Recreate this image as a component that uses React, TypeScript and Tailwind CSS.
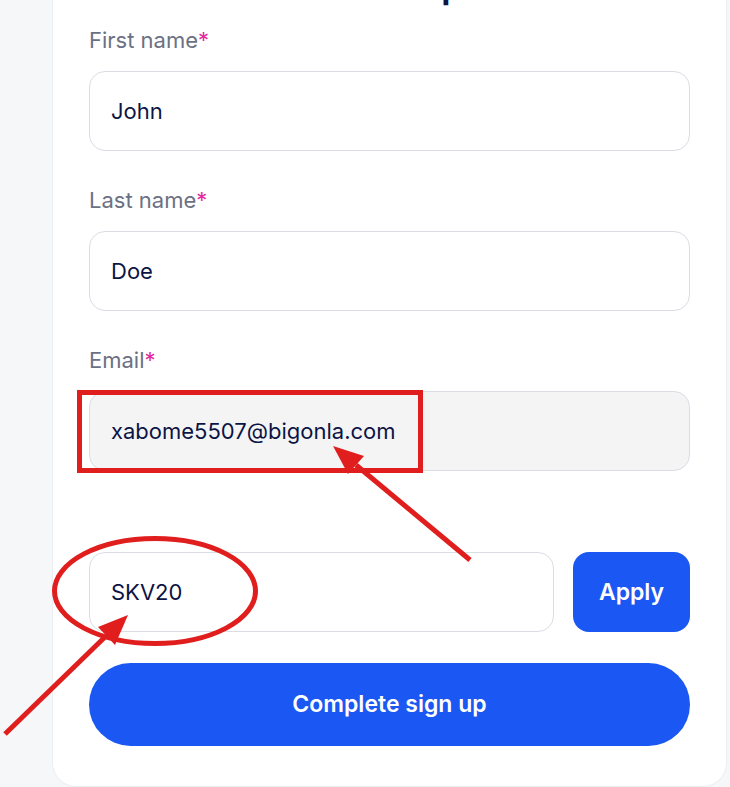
import React from "react";

const font = { fontFamily: "Inter, 'Noto Sans', sans-serif" };

interface FieldProps {
  label: string;
  value: string;
  disabled?: boolean;
  className?: string;
}

const Field = ({ label, value, disabled, className }: FieldProps) => {
  return (
    <div className={className}>
      <label className="block h-[30px] text-[22px] leading-[30px] text-[#6b7184]">
        {label}
        <span className="text-[#e2289d]">*</span>
      </label>
      <input
        readOnly
        value={value}
        className={
          disabled
            ? "mt-[16px] block h-[80px] w-full rounded-[16px] border border-[#dadde4] bg-[#f4f4f5] px-[21px] text-[22px] text-[#0c1445] outline-none"
            : "mt-[16px] block h-[80px] w-full rounded-[16px] border border-[#dadde4] bg-white px-[21px] text-[22px] text-[#0c1445] outline-none"
        }
      />
    </div>
  );
};

const Annotations = () => {
  return (
    <svg
      className="pointer-events-none absolute left-0 top-0"
      width="730"
      height="787"
      viewBox="0 0 730 787"
    >
      <rect x="79.5" y="392.5" width="341" height="78" fill="none" stroke="#e01e1e" strokeWidth="5" />
      <ellipse cx="155" cy="591" rx="100.5" ry="52.5" fill="none" stroke="#e01e1e" strokeWidth="5" />
      <line x1="470" y1="560" x2="356" y2="465" stroke="#e01e1e" strokeWidth="5" />
      <polygon points="333,446 364,456 348,474" fill="#e01e1e" />
      <line x1="5" y1="734" x2="106" y2="636" stroke="#e01e1e" strokeWidth="5" />
      <polygon points="128,615 115,645 98,627" fill="#e01e1e" />
    </svg>
  );
};

export default function App() {
  return (
    <div className="relative min-h-screen overflow-hidden bg-[#f6f7f9]" style={font}>
      <div className="ml-[52px] w-[675px] rounded-b-[24px] border border-t-0 border-[#eceef2] bg-white px-[36px] pb-[40px]">
        <h1 className="-mt-[32px] h-[40px] pl-[2px] text-center text-[32px] font-bold leading-[40px] text-[#0c1445]">
          Last step
        </h1>
        <Field label="First name" value="John" className="mt-[17px]" />
        <Field label="Last name" value="Doe" className="mt-[34px]" />
        <Field label="Email" value="xabome5507@bigonla.com" disabled className="mt-[34px]" />
        <div className="mt-[81px] flex gap-[19px]">
          <input
            readOnly
            value="SKV20"
            className="block h-[80px] min-w-0 flex-1 rounded-[16px] border border-[#dadde4] bg-white px-[21px] text-[22px] text-[#0c1445] outline-none"
          />
          <button className="h-[80px] w-[117px] rounded-[16px] bg-[#1b57f2] text-[23px] font-semibold text-white">
            Apply
          </button>
        </div>
        <button className="mt-[31px] h-[83px] w-full rounded-full bg-[#1b57f2] text-[23px] font-semibold text-white">
          Complete sign up
        </button>
      </div>
      <Annotations />
    </div>
  );
}
